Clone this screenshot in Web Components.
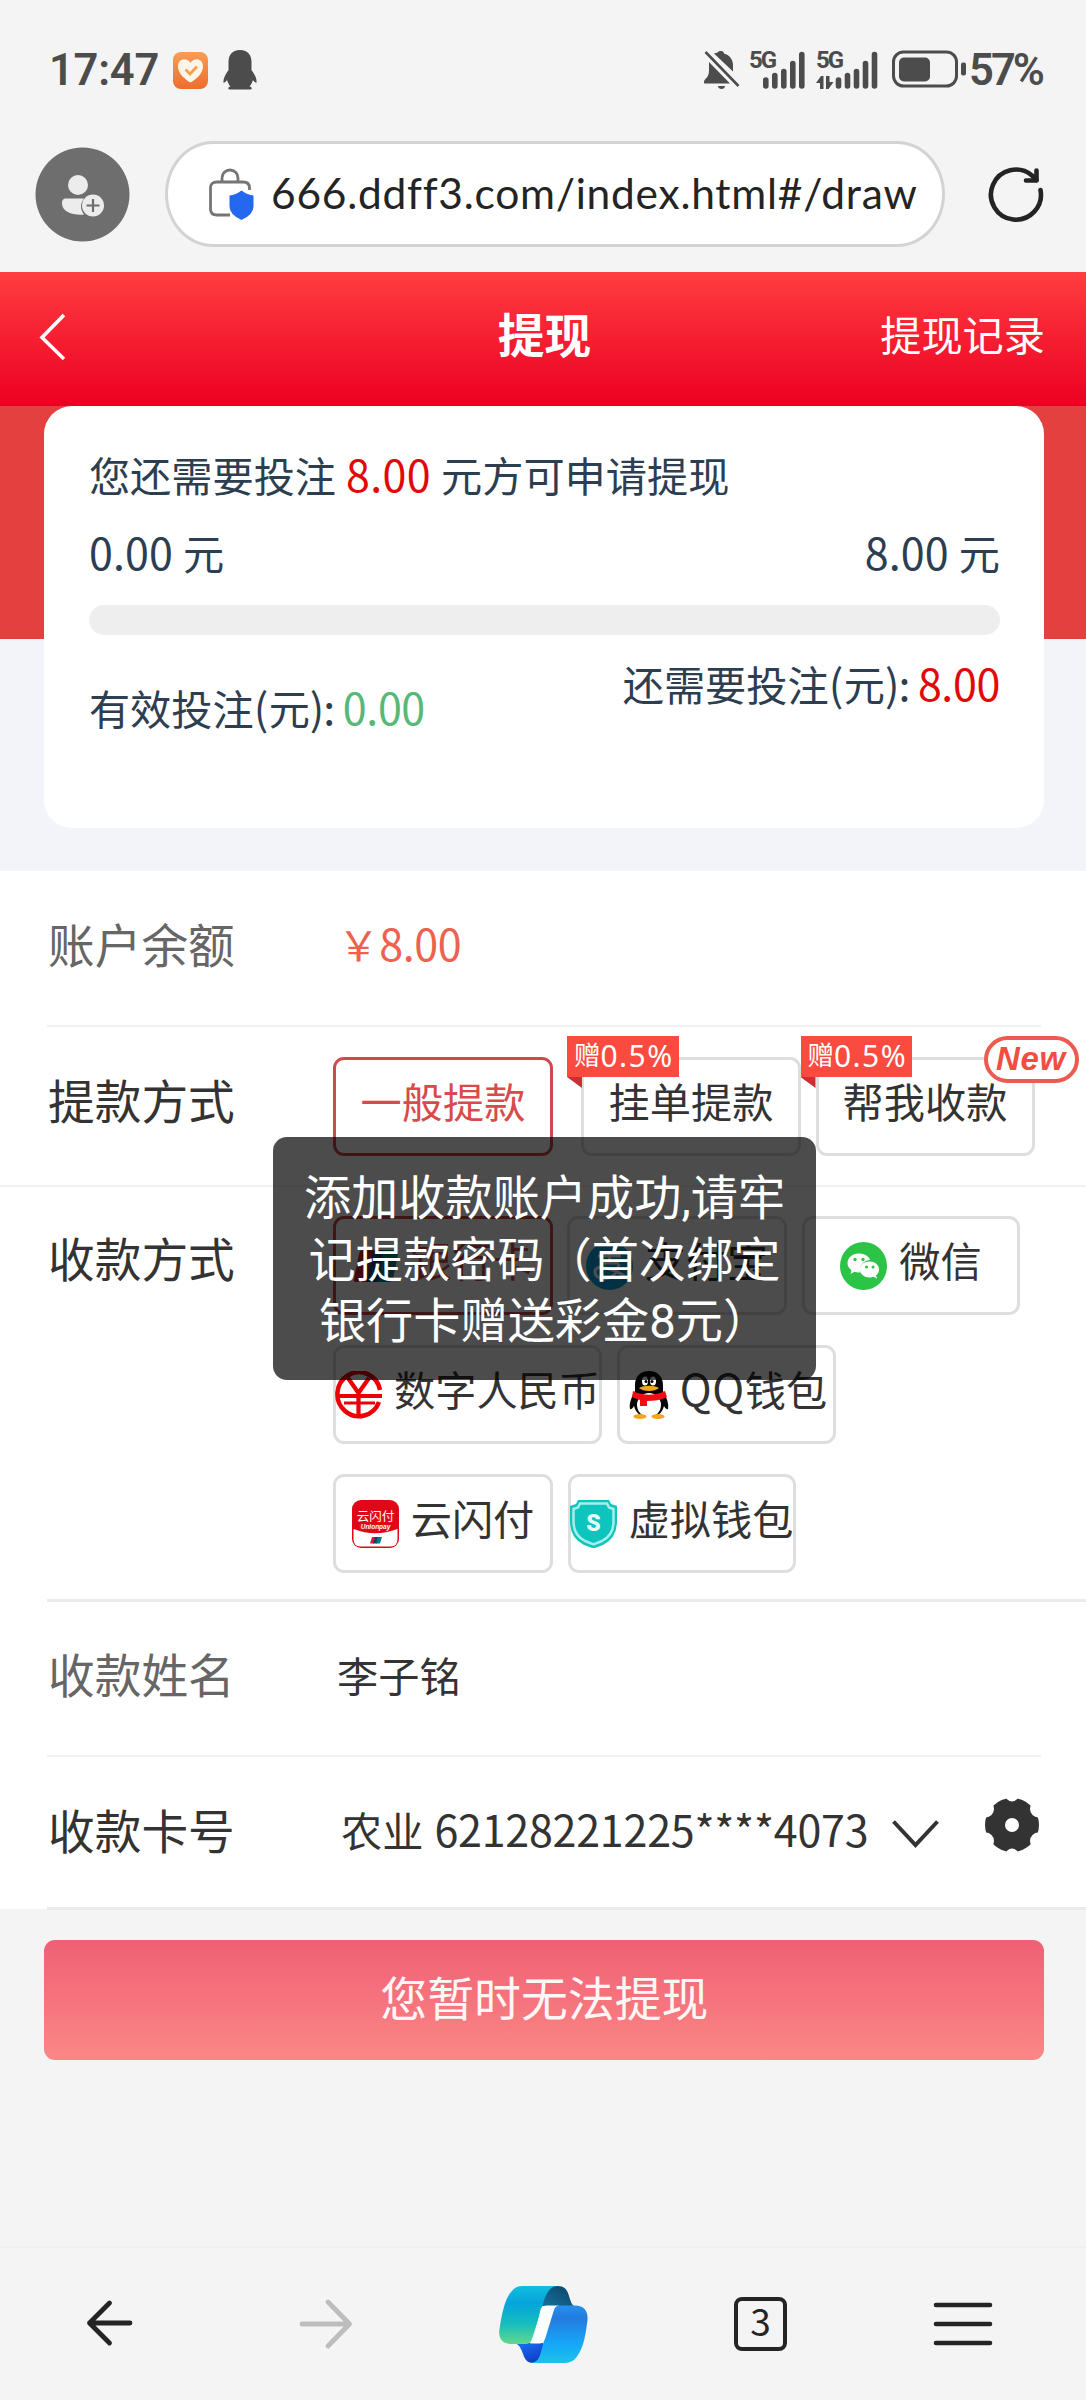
<!DOCTYPE html>
<html lang="zh-CN">
<head>
<meta charset="utf-8">
<title>提现</title>
<style>
html,body{margin:0;padding:0}
body{width:1086px;height:2400px;background:#f4f4f4;overflow:hidden;font-family:Roboto,"Noto Sans CJK SC",sans-serif;font-size:41.2px;line-height:60px;color:#333;position:relative}
</style>
</head>
<body>
<status-bar></status-bar>
<address-bar>666.ddff3.com/index.html#/draw</address-bar>
<page-header><span>提现</span><span slot="action">提现记录</span></page-header>
<wager-card></wager-card>
<withdraw-form></withdraw-form>
<submit-button>您暂时无法提现</submit-button>
<browser-nav></browser-nav>
<toast-message>添加收款账户成功,请牢<br>记提款密码（首次绑定<br>银行卡赠送彩金8元）</toast-message>
<script>
const define = (name, html, after) => customElements.define(name, class extends HTMLElement {
  connectedCallback() {
    if (this.shadowRoot) return;
    const t = document.createElement('template');
    t.innerHTML = html;
    this.attachShadow({mode: 'open'}).append(t.content.cloneNode(true));
    if (after) after(this);
  }
});

/* Text run whose tracking is adjusted so that its advance equals the w attribute */
define('fit-text', `<style>:host{display:inline-block;white-space:pre}</style><slot></slot>`, el => {
  const n = el.textContent.length, w = parseFloat(el.getAttribute('w'));
  const r = document.createRange(); r.selectNodeContents(el);
  el.style.letterSpacing = ((w - r.getBoundingClientRect().width) / n).toFixed(3) + 'px';
});

define('status-bar', `<style>
:host{display:flex;height:130px;box-sizing:border-box;padding:42px 0 34px 49px;color:#4c4c4c;align-items:center}
.b{font:600 43.5px/54px Roboto,sans-serif;position:relative;top:2px}
svg{display:block;flex:none}
.g{flex:1}
.sig{display:grid;height:54px}
.sig>*{grid-area:1/1}
.sig b{font:700 24px/26px Roboto,sans-serif;padding-top:5px}
</style>
<fit-text class="b" w="110">17:47</fit-text>
<svg style="margin:2px 0 0 14px" width="35" height="37" viewBox="0 0 35 37"><defs><linearGradient id="o" x2="0" y2="1"><stop stop-color="#f99c55"/><stop offset="1" stop-color="#ee6d2d"/></linearGradient></defs><rect width="35" height="37" rx="8" fill="url(#o)"/><path d="M17.500 30.500C13 28 5 22 5 14.500c0-8 9-9.500 12.500-3.500C21 5 30 6.500 30 14.500c0 7.500-8 13.500-12.500 16z" fill="#fff4e8"/><path d="M12.500 17.500l4.500 4.500 7-7.500" fill="none" stroke="#f9a04f" stroke-width="2.800"/></svg>
<svg style="margin:2px 0 0 15px" width="34" height="40" viewBox="0 0 34 40"><path fill="#4c4c4c" d="M17 0C8.500 0 5.500 6 5.500 12v8C2 25 0 29 .5 32.500c.5 1 2.500-1 3.500-2.500 1 3 2 5 3.500 6.500-3 .5-3 3 0 3h19c3 0 3-2.500 0-3 1.500-1.500 2.500-3.500 3.500-6.500 1 1.500 3 3.500 3.500 2.500.5-3.500-1.500-7.500-5-12.500v-8C28.500 6 25.500 0 17 0z"/></svg>
<div class="g"></div>
<svg style="margin-top:2px" width="36" height="40" viewBox="0 0 36 40"><g fill="#4c4c4c"><path d="M17 1c2.500 0 3 2 3 2.500 6 1.500 9 6.500 9 12v6L10 3.500c1-.5 3-.5 3.500-1C14.500 1 15.500 1 17 1z"/><path d="M5 12l21 21.500H1c-1.500 0-1.500-2 0-4 3.500-3 4-6 4-10z"/><path d="M14 36h7c0 4-7 4-7 0z"/></g><path d="M1.500 2l33 34" stroke="#4c4c4c" stroke-width="2.600"/></svg>
<div class="sig" style="margin-left:9px;width:58px"><b><fit-text w="26">5G</fit-text></b><svg width="58" height="54"><g stroke="#4c4c4c" stroke-width="5.600" stroke-linecap="round"><path d="M16.800 38v6M25.800 33.500v10.500M34.800 29.500v14.500M43.800 21.500v22.500M52.800 12.500v31.500"/></g></svg></div>
<div class="sig" style="margin-left:9px;width:64px"><b><fit-text w="26">5G</fit-text></b><svg width="64" height="54"><g stroke="#4c4c4c" stroke-width="5.600" stroke-linecap="round"><path d="M22.500 38v6M31.500 33.500v10.500M40.500 29.500v14.500M49.500 21.500v22.500M58.500 12.500v31.500"/></g><path fill="#4c4c4c" d="M0 41l5-7h2.500v13h-3.500v-6zM17.500 40l-5 7H10V34h3.500v6z"/></svg></div>
<svg style="margin-left:12px" width="76" height="54"><rect x="1.500" y="10" width="63" height="34" rx="10" fill="none" stroke="#4c4c4c" stroke-width="3"/><rect x="7" y="15.500" width="31" height="24" rx="5" fill="#4c4c4c"/><rect x="69" y="20.500" width="5" height="13" rx="2" fill="#4c4c4c"/></svg>
<fit-text class="b" w="73" style="margin:0 44px 0 1px">57%</fit-text>`);

define('address-bar', `<style>
:host{display:flex;height:142px;box-sizing:border-box;padding:11px 41px 25px 35px;align-items:center}
svg{flex:none;display:block}
.pill{display:flex;align-items:center;width:780px;height:106px;box-sizing:border-box;border:3px solid #d3d3d3;border-radius:48px/53px;background:#fff;margin:0 43px 0 35px;padding-left:41px;flex:none}
.url{font:42.5px/60px Lato,sans-serif;color:#242424;margin:-3px 0 0 15px}
</style>
<svg width="95" height="95" viewBox="0 0 95 95"><circle cx="47.500" cy="47.500" r="47" fill="#6e6e6e"/><g fill="#ececec"><circle cx="43" cy="38" r="10"/><path d="M31 51.500h18c-4 5-4 11 0 16-10 1-22-2-22-11 0-3 1-5 4-5z"/><circle cx="58" cy="58.500" r="11"/></g><path d="M51.500 58.500h13M58 52v13" stroke="#6e6e6e" stroke-width="2.200"/></svg>
<div class="pill"><svg width="47" height="54" viewBox="0 0 47 54"><g fill="none" stroke="#757575" stroke-width="2.800"><path d="M40.500 23v-2q0-6-6.500-6H8q-6.500 0-6.500 6v21q0 6 6.500 6h13"/><path d="M13 15V11a8 8 0 0 1 16 0v4"/></g><path fill="#2368ee" d="M32.500 23.500q6 4.500 12 5v11q0 8-12 13.500-12-5.500-12-13.500v-11q6-.5 12-5z"/></svg>
<span class="url"><fit-text></fit-text></span></div>
<svg width="58" height="60" viewBox="0 0 58 60"><g fill="none" stroke="#242424" stroke-width="4.600" stroke-linecap="round" stroke-linejoin="round"><path d="M52.500 26A25 25 0 1 1 44 11.500L48.500 16"/><path d="M48.500 6.500v10H38"/></g></svg>`, el => {
  const f = el.shadowRoot.querySelector('fit-text'); f.textContent = el.textContent;
  f.style.letterSpacing = '0';
  f.style.letterSpacing = ((645 - f.getBoundingClientRect().width) / f.textContent.length).toFixed(3) + 'px';
});

define('page-header', `<style>
:host{display:grid;grid-template-columns:1fr auto 1fr;align-items:center;height:134px;color:#fff;background:linear-gradient(#ff3d40,#ec0022)}
svg{margin-left:39px;margin-top:-5px;display:block}
.t{font-size:46.700px;font-weight:700;margin:-4px 0 0 3px}
.r{justify-self:end;margin:-5px 41px 0 0}
</style><svg width="28" height="48" viewBox="0 0 28 48"><path d="M25 2L3 24.500l22 21.500" fill="none" stroke="#fff" stroke-width="3.600"/></svg><div class="t"><slot></slot></div><div class="r"><slot name="action"></slot></div>`);

define('wager-card', `<style>
:host{display:block;height:465px;background:linear-gradient(#e44040 233px,#f3f4f9 233px);color:#2c3e50}
.c{width:1000px;height:422px;margin-left:44.400px;box-sizing:border-box;padding:42px 44.500px 0;background:#fff;border-radius:28px}
.row{display:flex;justify-content:space-between}
fit-text{font-family:"Noto Sans CJK SC",sans-serif;font-size:43px;line-height:0}
.red{color:#e20808}.green{color:#57b877}
.bar{height:30px;border-radius:15px;background:#eee;margin-top:19px}
</style><div class="c">
<div>您还需要投注<fit-text w="105" class="red"> 8.00 </fit-text>元方可申请提现</div>
<div class="row" style="margin-top:18px"><span><fit-text w="94">0.00 </fit-text>元</span><span><fit-text w="94">8.00 </fit-text>元</span></div>
<div class="bar"></div>
<div class="row" style="margin-top:22px"><span style="margin-top:24px">有效投注<fit-text w="15">(</fit-text>元<fit-text w="33">): </fit-text><fit-text w="82" class="green">0.00</fit-text></span><span>还需要投注<fit-text w="15">(</fit-text>元<fit-text w="33">): </fit-text><fit-text w="82" class="red">8.00</fit-text></span></div>
</div>`);

define('form-row', `<style>
:host{display:flex;box-sizing:border-box;position:relative}
.l{width:285px;padding-left:48px;font-size:46.700px;flex:none}
:host([muted]) .l{color:#666}
.v{flex:1}
.line{position:absolute;left:47px;right:45px;bottom:-1px;height:2px;background:#f0f1f2}
:host([full]) .line{left:0;right:0}
:host([bleed]) .line{right:0;height:3px;background:#ebebeb}
</style><div class="l"><slot name="label"></slot></div><div class="v"><slot></slot></div><div class="line"></div>`);

define('option-button', `<style>
:host{display:flex;box-sizing:border-box;height:99px;border:3px solid #dedede;border-radius:11px;justify-content:center;position:relative;background:#fff;padding-top:14px;white-space:nowrap;flex:none}
:host([active]){border-color:#cf4a4c;color:#d94a4a}
::slotted(svg){width:47px;height:48px;margin:9px 12px 0 0;flex:none}
</style><slot></slot>`);

define('bonus-tag', `<style>
:host{position:absolute;left:-18px;top:-24px;width:111.500px;height:52px;color:#fff}
.b{background:#fb4a40;height:41px;padding-left:7px;display:flex;line-height:39px;font-size:26.500px;box-sizing:border-box}
.n{font-family:"Noto Sans",sans-serif;font-size:30px}
i{display:block;width:15px;height:11px;background:#cb2f33;clip-path:polygon(0 0,100% 0,100% 100%)}
</style><div class="b"><slot></slot><fit-text class="n" w="73">0.5%</fit-text></div><i></i>`);

define('new-tag', `<style>:host{position:absolute;right:-47px;top:-24px;width:95px;height:47px;box-sizing:border-box;border:4px solid #ec5a50;border-radius:24px;background:#fff;color:#f04e41;font:italic 700 33px/38px "Liberation Sans",sans-serif;text-align:center}</style><fit-text></fit-text>`, el => {
  const f = el.shadowRoot.querySelector('fit-text'); f.textContent = el.textContent; f.style.letterSpacing = '0';
  f.style.letterSpacing = ((70 - f.getBoundingClientRect().width) / 3).toFixed(3) + 'px';
});

define('withdraw-form', `<style>
:host{display:block;height:1038px;background:#fff}
.opts{display:flex;flex-wrap:wrap;row-gap:30px}
.pay{width:700px}
fit-text{font-family:"Noto Sans CJK SC",sans-serif;font-size:43px;line-height:0}
option-button{font-size:41.2px}
</style>
<form-row muted style="height:155px;padding-top:46px"><span slot="label">账户余额</span><span style="color:#ee614f;margin-left:5px">￥<fit-text w="82">8.00</fit-text></span></form-row>
<form-row full style="height:160px;padding-top:31px"><span slot="label" style="display:block;margin-top:16px">提款方式</span>
<div class="opts"><option-button active style="width:220px">一般提款</option-button><option-button style="width:220px;margin-left:28px">挂单提款<bonus-tag style="left:-17px">赠</bonus-tag></option-button><option-button style="width:219px;margin-left:14.500px">帮我收款<bonus-tag>赠</bonus-tag><new-tag>New</new-tag></option-button></div></form-row>
<form-row bleed style="height:415px;padding-top:30px"><span slot="label" style="display:block;margin-top:15px">收款方式</span>
<div class="opts pay">
<option-button active style="width:220px"><svg viewBox="0 0 47 48"><path d="M10 8h20L24 40H4q-3 0-2-3l5-25q1-4 3-4z" fill="#d8232a"/><path d="M23 8h12L29 40H15l5-28q1-4 3-4z" fill="#0b4f8c"/><path d="M33 8h10q4 0 3 4l-5 25q-1 3-4 3H26l5-28q0-4 2-4z" fill="#0c8585"/></svg>银行卡</option-button>
<option-button style="width:220px;margin-left:14px"><svg viewBox="0 0 47 48"><ellipse cx="23.500" cy="24" rx="23.500" ry="24" fill="#08a3e4"/><path d="M12 14h23M23.500 9v13M14 21h19M33 22c-4 20-24 17-24 8 0-9 17-4 31 5" fill="none" stroke="#fff" stroke-width="3"/></svg>支付宝</option-button>
<option-button style="width:218px;margin-left:15px"><svg viewBox="0 0 47 48"><ellipse cx="23.500" cy="24" rx="23.500" ry="24" fill="#2cc446"/><path d="M18.500 11.500c-6.500 0-11 4.500-11 9.500 0 3 1.500 5.500 4 7.200L10.500 32l4-2.200c2 .6 4 .8 6 .6-2-7 4-12.400 9.500-12.400-1-4-6-6.500-11.500-6.500z" fill="#fff"/><path d="M29.500 19.500c-5.500 0-9.500 3.500-9.500 8s4 8 9.500 8c1.500 0 3-.3 4-.8l3.500 2-1-3.200c2-1.500 3-3.500 3-6 0-4.500-4-8-9.500-8z" fill="#fff"/><g fill="#2cc446"><circle cx="15" cy="17.500" r="1.700"/><circle cx="23" cy="17.500" r="1.700"/><circle cx="26.500" cy="25" r="1.500"/><circle cx="33" cy="25" r="1.500"/></g></svg>微信</option-button>
<option-button style="width:269px"><svg viewBox="0 0 47 48"><g fill="none" stroke="#ec0006"><path d="M45 19A21.500 22 0 1 0 44 31" stroke-width="4.500"/><path d="M13 7l10.500 15L34 7M23.500 22v23M3 25h44" stroke-width="4.200"/><path d="M9 32h31" stroke-width="3"/></g></svg>数字人民币</option-button>
<option-button style="width:219px;margin-left:15px"><svg viewBox="0 0 47 48"><path d="M23 0c-9 0-14 6-14 14v6C5 27 3 33 4 38c1 1 3-1 4-3 1 4 3 7 6 9h18c3-2 5-5 6-9 1 2 3 4 4 3 1-5-1-11-5-18v-6C37 6 32 0 23 0z" fill="#060606"/><ellipse cx="23" cy="34" rx="12" ry="12" fill="#fff"/><ellipse cx="14" cy="45.500" rx="6.500" ry="2.500" fill="#f4a51c"/><ellipse cx="32" cy="45.500" rx="6.500" ry="2.500" fill="#f4a51c"/><ellipse cx="19" cy="10" rx="3" ry="4.500" fill="#fff"/><ellipse cx="27" cy="10" rx="3" ry="4.500" fill="#fff"/><circle cx="20" cy="10.500" r="1.500"/><circle cx="26" cy="10.500" r="1.500"/><path d="M13 17c5-3 15-3 20 0-4 4-16 4-20 0z" fill="#f4a51c"/><path d="M7 20c10 5 22 5 32 0l2 6c-6 3-13 4-20 4v5h-7v-6c-3-1-6-2-8-3z" fill="#f20d14"/></svg><span style="margin-left:-5px"><fit-text w="65">QQ</fit-text>钱包</span></option-button>
<option-button style="width:220px"><svg viewBox="0 0 47 48"><rect width="47" height="48" rx="9" fill="#df0818"/><path d="M1.500 29Q23 37.500 45.500 29V39q0 7.500-7 7.500H8.500q-7 0-7-7.500z" fill="#fff"/><path d="M20 37h4l-2 6.500h-4z" fill="#dd1730"/><path d="M23 37h4l-2 6.500h-4z" fill="#123f77"/><path d="M26 37h4l-2 6.500h-4z" fill="#087a82"/><text x="23.500" y="20.500" text-anchor="middle" font-family="Noto Sans CJK SC" font-size="12.500" fill="#fff">云闪付</text><text x="23.500" y="29" text-anchor="middle" font-family="Liberation Sans" font-weight="700" font-style="italic" font-size="6.500" fill="#fff">Unionpay</text></svg>云闪付</option-button>
<option-button style="width:228px;margin-left:14.500px"><svg viewBox="0 0 47 48"><path d="M8 0h31l2 4 6 2v15q0 17-14 24l-9.500 3.500L14 45Q0 38 0 21V6l6-2z" fill="#0ec5bd"/><path d="M10 3.500h27l2 4 4.500 1.500v13q0 13-11.500 19l-8.500 3.500L15 41Q3.500 35 3.500 22V9L8 7.500z" fill="#0ec5bd" stroke="#a7eeeb" stroke-width="2.500"/><text x="23.500" y="30.500" text-anchor="middle" font-family="Roboto" font-weight="900" font-size="23" fill="#e4ffff">S</text></svg>虚拟钱包</option-button>
</div></form-row>
<form-row muted style="height:155px;padding-top:46px"><span slot="label">收款姓名</span><span style="display:block;margin:1px 0 0 4px">李子铭</span></form-row>
<form-row bleed style="height:153px;padding-top:47px"><span slot="label">收款卡号</span><div style="display:flex;margin-left:8px"><span>农业<fit-text w="11"> </fit-text><fit-text w="434">62128221225****4073</fit-text></span><svg style="margin:15px 0 0 24px" width="50" height="32" viewBox="0 0 50 32"><path d="M1.500 3.500l22 23.500 22-23.500" fill="none" stroke="#333" stroke-width="4"/></svg><svg style="margin:-6px 0 0 42px" width="56" height="56" viewBox="-28 -28 56 56"><defs><mask id="g"><circle r="27" fill="#fff"/><circle r="7"/><circle cy="-30" r="6.500"/><circle cy="30" r="6.500"/><circle cx="-26.500" cy="-16" r="8.500"/><circle cx="26.500" cy="-16" r="8.500"/><circle cx="-26.500" cy="16" r="8.500"/><circle cx="26.500" cy="16" r="8.500"/></mask></defs><rect x="-28" y="-28" width="56" height="56" fill="#333" mask="url(#g)"/></svg></div></form-row>`);

define('submit-button', `<style>:host{display:flex;justify-content:center;box-sizing:border-box;width:1000px;height:120px;margin:31px 0 0 44.400px;padding-top:30px;border-radius:11px;background:linear-gradient(#f06075,#fb8785);color:#fff6f6;font-size:46.900px}</style><slot></slot>`);

define('toast-message', `<style>:host{position:absolute;left:273px;top:1137px;width:543px;height:243px;box-sizing:border-box;padding-top:32px;border-radius:14px;background:rgba(0,0,0,.7);color:#fff;font-size:47.200px;line-height:61.500px;text-align:center;white-space:nowrap;z-index:5}</style><slot></slot>`);

define('browser-nav', `<style>
:host{display:flex;align-items:center;box-sizing:border-box;height:154px;margin-top:186px;border-top:2px solid #f0f0f0;padding-left:85px}
svg{display:block;flex:none}
.n{box-sizing:border-box;width:53px;height:54px;border:4.500px solid #242424;border-radius:8px;margin-left:146px;margin-top:-1px;text-align:center;font:37px/39px "Noto Sans CJK SC",sans-serif;color:#242424}
</style>
<svg style="margin-top:-2px" width="49" height="48" viewBox="0 0 49 48"><path d="M45 24H4.500M24.500 4L4.500 24l20 20" fill="none" stroke="#242424" stroke-width="4.800" stroke-linecap="round" stroke-linejoin="round"/></svg>
<svg style="margin:-1px 0 0 164px" width="56" height="52" viewBox="0 0 56 52"><path d="M4 26h47.500M30 4l21.500 22L30 48" fill="none" stroke="#bdbdbd" stroke-width="4.800" stroke-linecap="round" stroke-linejoin="round"/></svg>
<svg style="margin:0 0 0 145px" width="89" height="77" viewBox="0 0 89 77"><defs><linearGradient id="a" x2="0" y2="1"><stop stop-color="#12bde0"/><stop offset=".3" stop-color="#04a4dc"/><stop offset=".65" stop-color="#16bdbd"/><stop offset="1" stop-color="#62d98c"/></linearGradient><linearGradient id="b" x2="0" y2="1"><stop stop-color="#2492ee"/><stop offset=".22" stop-color="#247be0"/><stop offset=".7" stop-color="#15aafa"/><stop offset="1" stop-color="#1cc3e6"/></linearGradient><linearGradient id="c" x2=".6" y2="1"><stop stop-color="#1776f5"/><stop offset="1" stop-color="#1239c8"/></linearGradient><linearGradient id="d" x1="1" y1="0" x2="0" y2="1"><stop stop-color="#0d4168"/><stop offset="1" stop-color="#14739c"/></linearGradient></defs>
<path d="M16 57h28l3 20H34C22 77 26 61 16 57z" fill="url(#c)"/><path d="M47 0h12c13 0 10 16 16 20H42z" fill="url(#d)"/>
<path d="M23 0h36c-8 0-12 7-15 18L34 50c-2 6-3 8-8 8H12C3 58-1 52 .5 43 3 27 6 13 12 6q4-6 11-6z" fill="url(#a)"/>
<path d="M66 77H32c6-1 8-4 10-11l10-38c2-6 4-8.500 9-8.500h15c11 0 14 8 12 18-2 17-5 26-10 33q-4 6.500-12 6.500z" fill="url(#b)"/><path d="M41.500 23.500q1.500-4 6.500-4h12q-4 0-5.500 6l-8 26q-1.500 6-6.500 6h-9q3-1 4.500-6z" fill="#fbfdff"/></svg>
<div class="n">3</div>
<svg style="margin:0 0 0 145px" width="62" height="48" viewBox="0 0 62 48"><path d="M4 5h54M4 24h54M4 43h54" stroke="#242424" stroke-width="4.600" stroke-linecap="round"/></svg>`);
</script>
</body>
</html>
